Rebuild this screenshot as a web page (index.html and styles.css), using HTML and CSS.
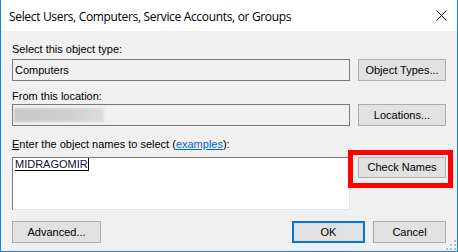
FILE: index.html
```html
<!DOCTYPE html>
<html>
<head>
<meta charset="utf-8">
<link rel="stylesheet" href="styles.css">
</head>
<body>
<div class="window">
  <div class="titlebar">
    <span class="title">Select Users, Computers, Service Accounts, or Groups</span>
    <svg class="close" width="11" height="11" viewBox="0 0 11 11"><path d="M0.5 0.5 L10.5 10.5 M10.5 0.5 L0.5 10.5" stroke="#000" stroke-width="1" fill="none"/></svg>
  </div>
  <div class="content">
    <div class="label l1">Select this object type:</div>
    <div class="row">
      <div class="field ro">Computers</div>
      <button class="btn">Object Types...</button>
    </div>
    <div class="label l2">From this location:</div>
    <div class="row">
      <div class="field ro"><span class="blur"></span></div>
      <button class="btn">Locations...</button>
    </div>
    <div class="label l3"><span class="ak">E</span>nter the object names to select (<a class="link">examples</a>):</div>
    <div class="row row3">
      <div class="field names"><span class="name">MIDRAGOMIR</span><span class="caret"></span></div>
      <div class="hl">
        <button class="btn">Check Names</button>
        <span class="redbox"></span>
      </div>
    </div>
    <div class="row bottom">
      <button class="btn adv">Advanced...</button>
      <div class="spacer"></div>
      <button class="btn ok">OK</button>
      <button class="btn cancel">Cancel</button>
    </div>
  </div>
  <svg class="grip" width="10" height="10" viewBox="0 0 10 10">
    <rect x="8" y="0" width="2" height="2" fill="#bcbcbc"/>
    <rect x="4" y="4" width="2" height="2" fill="#bcbcbc"/>
    <rect x="8" y="4" width="2" height="2" fill="#bcbcbc"/>
    <rect x="0" y="8" width="2" height="2" fill="#bcbcbc"/>
    <rect x="4" y="8" width="2" height="2" fill="#bcbcbc"/>
    <rect x="8" y="8" width="2" height="2" fill="#bcbcbc"/>
  </svg>
</div>
</body>
</html>
```
FILE: styles.css
```css
* { box-sizing: border-box; }
html, body { margin: 0; padding: 0; background: #f0f0f0; }
.window {
  position: relative;
  width: 458px;
  height: 252px;
  background: #f0f0f0;
  border-left: 1px solid #1883d7;
  border-right: 1px solid #1883d7;
  border-bottom: 1px solid #1883d7;
  font-family: "Liberation Sans", Arial, sans-serif;
  font-size: 11px;
  color: #000;
  display: flex;
  flex-direction: column;
}
.titlebar {
  height: 31px;
  background: #fff;
  display: flex;
  align-items: center;
  padding-left: 8px;
  padding-right: 10px;
}
.title {
  flex: 1;
  font-family: "Open Sans", "Noto Sans", sans-serif;
  font-size: 12px;
  letter-spacing: -0.33px;
  color: #000;
  padding-top: 1px;
}
.close { display: block; }
.content {
  flex: 1;
  padding: 0 11px 0 11px;
  display: flex;
  flex-direction: column;
}
.label { line-height: 13px; height: 13px; white-space: nowrap; }
.l1 { margin-top: 12px; margin-bottom: 3px; }
.l2 { margin-top: 9px; margin-bottom: 1px; }
.l3 { margin-top: 12px; margin-bottom: 6px; }
.ak { text-decoration: underline; }
.link { color: #0066cc; text-decoration: underline; }
.row { display: flex; gap: 8px; height: 22px; align-items: flex-start; }
.field {
  flex: 1;
  height: 22px;
  border: 1px solid #7a7a7a;
  background: #f0f0f0;
  padding: 0 2px;
  display: flex;
  align-items: center;
  line-height: 13px;
}
.blur {
  display: block;
  width: 90px;
  height: 14px;
  margin-left: -1px;
  background: linear-gradient(90deg, #c9c9c9 0%, #cfcfcf 60%, #dedede 100%);
  filter: blur(1px);
}
.row3 { height: 53px; }
.names {
  height: 53px;
  background: #fff;
  border-top: 1px solid #7a7a7a;
  border-left: 1px solid #7a7a7a;
  border-right: 1px solid #e3e3e3;
  border-bottom: 1px solid #e3e3e3;
  align-items: flex-start;
  padding-top: 0;
  padding-left: 2px;
}
.name {
  color: #0a0a3c;
  line-height: 12px;
  border-bottom: 1px solid #000;
}
.caret {
  display: block;
  width: 1px;
  height: 13px;
  background: #000;
}
.btn {
  width: 88px;
  height: 22px;
  background: #e1e1e1;
  border: 1px solid #adadad;
  font-family: "Liberation Sans", Arial, sans-serif;
  font-size: 11px;
  color: #000;
  padding: 0;
  margin: 0;
  line-height: 13px;
}
.hl { position: relative; width: 88px; height: 22px; }
.hl .btn { height: 21px; }
.redbox {
  position: absolute;
  left: -10px;
  top: -7px;
  width: 105px;
  height: 38px;
  border: 5px solid #ff0000;
  pointer-events: none;
}
.bottom { margin-top: 11px; gap: 8px; }
.adv { width: 89px; }
.spacer { flex: 1; }
.ok { width: 73px; border: 2px solid #0078d7; }
.cancel { width: 73px; }
.grip { position: absolute; right: 1px; bottom: 1px; }
```
